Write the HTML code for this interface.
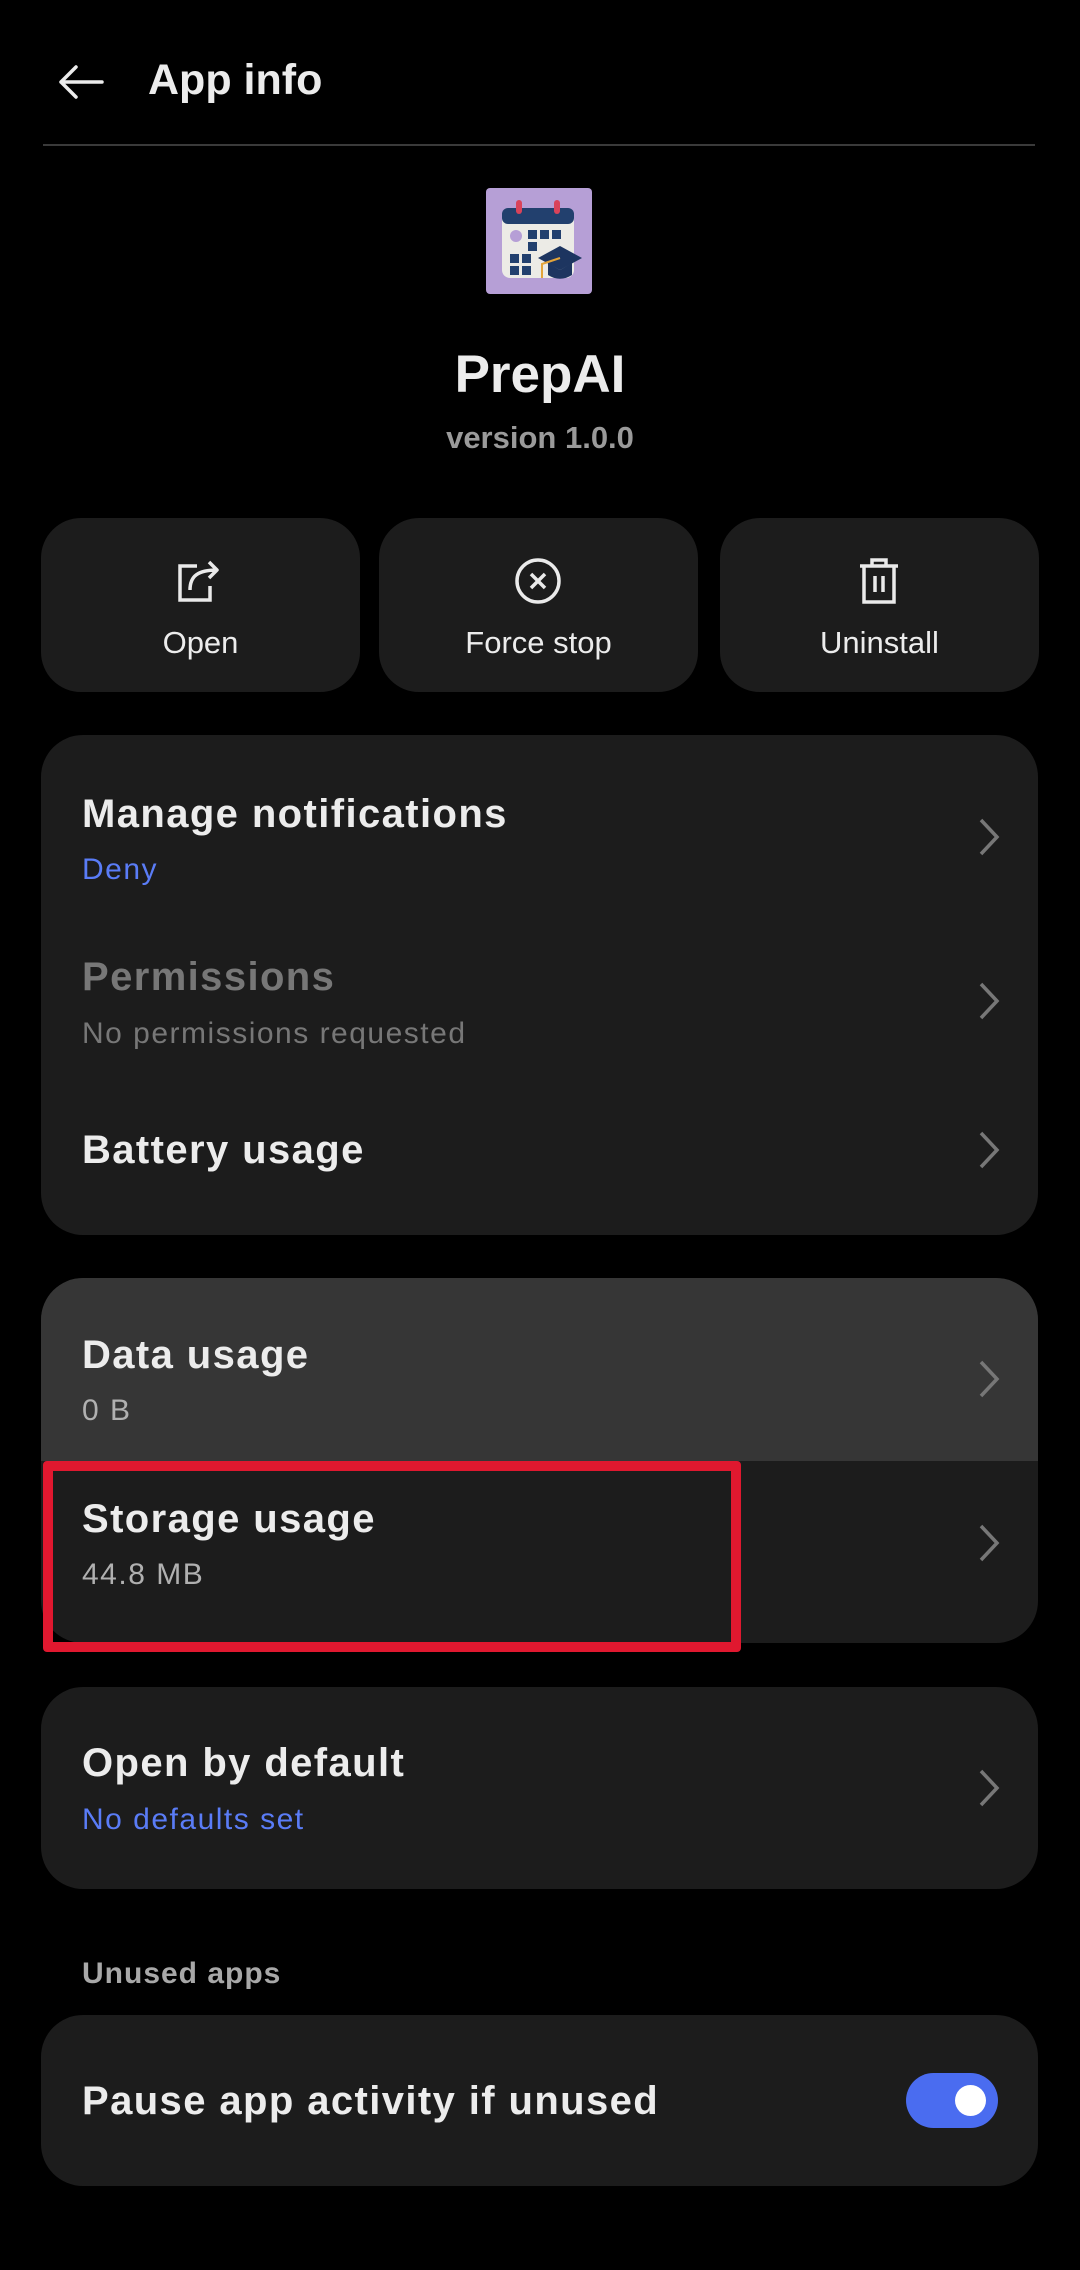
<!DOCTYPE html>
<html><head><meta charset="utf-8"><style>
*{margin:0;padding:0;box-sizing:border-box}
body{width:1080px;height:2270px;background:#000;font-family:"Liberation Sans",sans-serif;color:#ececec;position:relative;overflow:hidden}
.a{position:absolute}
.t{position:absolute;white-space:nowrap;line-height:1}
.card{position:absolute;left:41px;width:997px;background:#1c1c1c;border-radius:42px;overflow:hidden}
.btn{position:absolute;top:518px;height:174px;width:319px;background:#1c1c1c;border-radius:40px}
.h{font-size:40px;font-weight:bold;color:#ececec;letter-spacing:1.4px}
.s{font-size:30px;color:#9a9a9a;letter-spacing:1.5px}
.b{color:#5a7cf6}
.chev{position:absolute;left:978px}
</style></head><body>
<svg class="a" style="left:56px;top:64px" width="50" height="36" viewBox="0 0 50 36"><path d="M46 18H5M20 3L5 18l15 15" fill="none" stroke="#ececec" stroke-width="3.5" stroke-linecap="round" stroke-linejoin="round"/></svg>
<div class="t" style="left:148px;top:59px;font-size:43px;font-weight:bold">App info</div>
<div class="a" style="left:43px;top:144px;width:992px;height:2px;background:#3a3a3a"></div>

<svg class="a" style="left:486px;top:188px" width="106" height="106" viewBox="0 0 106 106">
<rect width="106" height="106" rx="4" fill="#b69fd6"/>
<rect x="16" y="20" width="72" height="70" rx="8" fill="#ecebe6"/>
<rect x="16" y="20" width="72" height="16" rx="6" fill="#22406e"/>
<rect x="30" y="12" width="6" height="14" rx="3" fill="#d9435a"/><rect x="68" y="12" width="6" height="14" rx="3" fill="#d9435a"/>
<circle cx="30" cy="48" r="6" fill="#b69fd6"/>
<g fill="#22406e"><rect x="42" y="42" width="9" height="9"/><rect x="54" y="42" width="9" height="9"/><rect x="66" y="42" width="9" height="9"/><rect x="42" y="54" width="9" height="9"/><rect x="24" y="66" width="9" height="9"/><rect x="36" y="66" width="9" height="9"/><rect x="24" y="78" width="9" height="9"/><rect x="36" y="78" width="9" height="9"/></g>
<path d="M52 70l22-12 22 12-22 12z" fill="#1d3560"/><path d="M62 75v12c8 5 16 5 24 0V75l-12 7z" fill="#1d3560"/><path d="M74 70l-18 6v14" stroke="#e3a43a" stroke-width="2" fill="none"/>
</svg>
<div class="t" style="left:0;width:1080px;text-align:center;top:348px;font-size:53px;font-weight:bold">PrepAI</div>
<div class="t" style="left:0;width:1080px;text-align:center;top:422px;font-size:31px;font-weight:bold;color:#9a9a9a">version 1.0.0</div>

<div class="btn" style="left:41px"></div><div class="btn" style="left:379px"></div><div class="btn" style="left:720px"></div>
<svg class="a" style="left:175px;top:556px" width="50" height="50" viewBox="0 0 50 50"><path d="M22 10H5v34h30V30" fill="none" stroke="#eaeaea" stroke-width="3.5"/><path d="M15 34c0-14 8-20 27-20M34 6l8 8-8 8" fill="none" stroke="#eaeaea" stroke-width="3.5" stroke-linejoin="round"/></svg>
<svg class="a" style="left:513px;top:556px" width="50" height="50" viewBox="0 0 50 50"><circle cx="25" cy="25" r="21" fill="none" stroke="#eaeaea" stroke-width="3.5"/><path d="M18 18l14 14M32 18L18 32" stroke="#eaeaea" stroke-width="3.5"/></svg>
<svg class="a" style="left:854px;top:556px" width="50" height="50" viewBox="0 0 50 50"><path d="M6 10h38M18 10V4h14v6M10 10v36h30V10M21 20v16M29 20v16" fill="none" stroke="#eaeaea" stroke-width="3.5"/></svg>
<div class="t" style="left:41px;width:319px;text-align:center;top:627px;font-size:31px">Open</div>
<div class="t" style="left:379px;width:319px;text-align:center;top:627px;font-size:31px">Force stop</div>
<div class="t" style="left:720px;width:319px;text-align:center;top:627px;font-size:31px">Uninstall</div>

<div class="card" style="top:735px;height:500px"></div>
<div class="t h" style="left:82px;top:794px">Manage notifications</div>
<div class="t s b" style="left:82px;top:855px">Deny</div>
<div class="t h" style="left:82px;top:957px;color:#777">Permissions</div>
<div class="t s" style="left:82px;top:1019px;color:#777">No permissions requested</div>
<div class="t h" style="left:82px;top:1130px">Battery usage</div>

<div class="card" style="top:1278px;height:365px"><div style="height:183px;background:#363636"></div></div>
<div class="t h" style="left:82px;top:1335px">Data usage</div>
<div class="t s" style="left:82px;top:1396px;color:#b0b0b0">0 B</div>
<div class="t h" style="left:82px;top:1499px">Storage usage</div>
<div class="t s" style="left:82px;top:1560px;color:#b0b0b0">44.8 MB</div>
<div class="a" style="left:43px;top:1461px;width:698px;height:191px;border:10px solid #e0182f;border-radius:4px"></div>

<div class="card" style="top:1687px;height:202px"></div>
<div class="t h" style="left:82px;top:1743px">Open by default</div>
<div class="t s b" style="left:82px;top:1805px">No defaults set</div>

<div class="t" style="left:82px;top:1959px;font-size:30px;font-weight:bold;color:#a8a8a8;letter-spacing:1px">Unused apps</div>
<div class="card" style="top:2015px;height:171px"></div>
<div class="t h" style="left:82px;top:2081px">Pause app activity if unused</div>
<div class="a" style="left:906px;top:2073px;width:92px;height:55px;border-radius:28px;background:#4a6cf0"></div>
<div class="a" style="left:955px;top:2085px;width:31px;height:31px;border-radius:50%;background:#fff"></div>

<svg class="chev" style="top:817px" width="22" height="40" viewBox="0 0 22 40"><path d="M3 3l16 17L3 37" fill="none" stroke="#777" stroke-width="3.5"/></svg>
<svg class="chev" style="top:981px" width="22" height="40" viewBox="0 0 22 40"><path d="M3 3l16 17L3 37" fill="none" stroke="#777" stroke-width="3.5"/></svg>
<svg class="chev" style="top:1130px" width="22" height="40" viewBox="0 0 22 40"><path d="M3 3l16 17L3 37" fill="none" stroke="#777" stroke-width="3.5"/></svg>
<svg class="chev" style="top:1359px" width="22" height="40" viewBox="0 0 22 40"><path d="M3 3l16 17L3 37" fill="none" stroke="#777" stroke-width="3.5"/></svg>
<svg class="chev" style="top:1523px" width="22" height="40" viewBox="0 0 22 40"><path d="M3 3l16 17L3 37" fill="none" stroke="#777" stroke-width="3.5"/></svg>
<svg class="chev" style="top:1768px" width="22" height="40" viewBox="0 0 22 40"><path d="M3 3l16 17L3 37" fill="none" stroke="#777" stroke-width="3.5"/></svg>
</body></html>
